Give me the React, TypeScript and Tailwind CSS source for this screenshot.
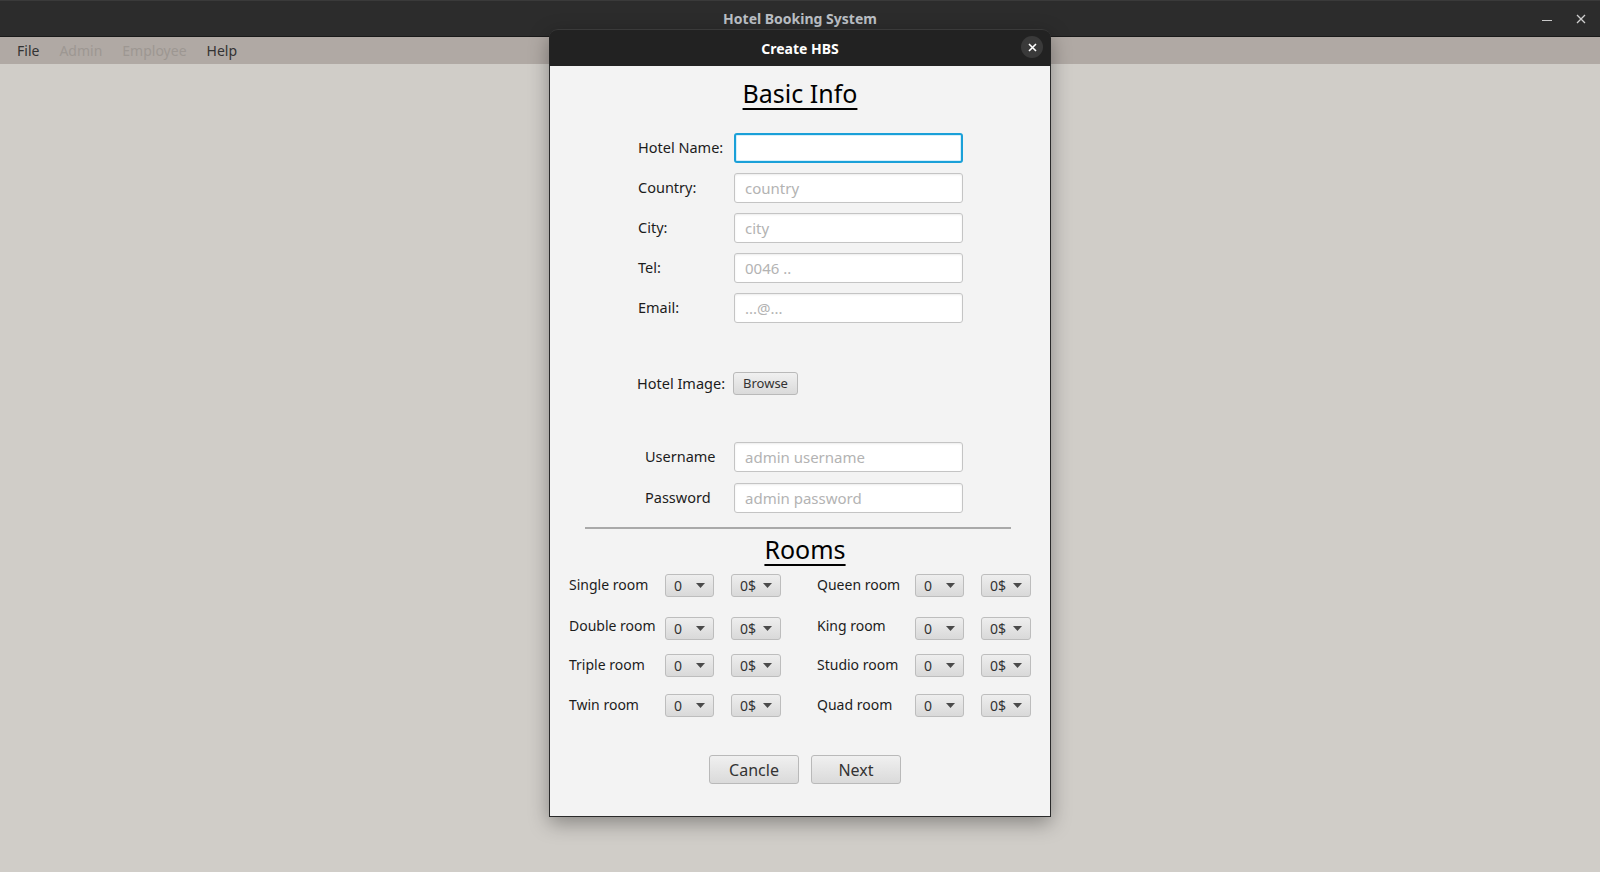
import React from "react";

const font = "font-['Noto_Sans','DejaVu_Sans',sans-serif]";

function TextField({ placeholder, focused }: { placeholder?: string; focused?: boolean }) {
  return (
    <div
      className={
        focused
          ? "h-[30px] w-[229px] rounded-[3px] border-2 border-[#1aa0d8] bg-white shadow-[inset_0_0_0_1px_#d6effa]"
          : "flex h-[30px] w-[229px] items-center rounded-[3px] border border-[#c4c4c4] bg-white px-[10px] text-[15px] text-[#b3b3b3] shadow-[inset_0_1px_2px_rgba(0,0,0,0.08)]"
      }
    >
      {placeholder}
    </div>
  );
}

function FormRow({
  label,
  children,
  className = "",
  labelClass = "pl-[88px] w-[184px]",
}: {
  label: string;
  children: React.ReactNode;
  className?: string;
  labelClass?: string;
}) {
  return (
    <div className={"flex items-center " + className}>
      <div className={"shrink-0 text-[14.5px] text-[#1c1c1c] " + labelClass}>{label}</div>
      {children}
    </div>
  );
}

function Combo({ value, width }: { value: string; width: string }) {
  return (
    <div
      className={
        "flex h-[23px] shrink-0 items-center justify-between rounded-[3px] border border-[#bdbdbd] bg-gradient-to-b from-[#eeeeee] to-[#d9d9d9] pl-[8px] pr-[8px] text-[14px] text-[#333] " +
        width
      }
    >
      <span>{value}</span>
      <svg width="9" height="5" viewBox="0 0 9 5">
        <path d="M0 0 L9 0 L4.5 5 Z" fill="#4a4a4a" />
      </svg>
    </div>
  );
}

function RoomPair({ label, lift, labelWidth }: { label: string; lift: string; labelWidth: string }) {
  return (
    <div className="flex items-center">
      <div className={"shrink-0 text-[14px] text-[#1c1c1c] " + labelWidth + " " + lift}>{label}</div>
      <Combo value="0" width="w-[49px]" />
      <div className="w-[17px]" />
      <Combo value="0$" width="w-[50px]" />
    </div>
  );
}

const rooms: [string, string, string, string][] = [
  ["Single room", "Queen room", "mt-[8px]", "-translate-y-[1px]"],
  ["Double room", "King room", "mt-[20px]", "-translate-y-[3px]"],
  ["Triple room", "Studio room", "mt-[14px]", "-translate-y-[1px]"],
  ["Twin room", "Quad room", "mt-[17px]", "-translate-y-[1px]"],
];

function GrayButton({ children, className = "" }: { children: React.ReactNode; className?: string }) {
  return (
    <div
      className={
        "flex items-center justify-center rounded-[3px] border border-[#b9b9b9] bg-gradient-to-b from-[#f0f0f0] to-[#dadada] text-[#333] " +
        className
      }
    >
      {children}
    </div>
  );
}

function Dialog() {
  return (
    <div className="absolute left-[549px] top-[29px] flex w-[502px] flex-col rounded-t-[9px] shadow-[0_6px_20px_rgba(0,0,0,0.35)]">
      <div className="relative flex h-[37px] items-center justify-center rounded-t-[9px] border-t border-[#3a3a3a] bg-[#222222]">
        <span className="text-[14px] font-bold text-white">Create HBS</span>
        <div className="absolute right-[8px] top-[6px] flex h-[22px] w-[22px] items-center justify-center rounded-full bg-[#3a3a3a]">
          <svg width="9" height="9" viewBox="0 0 9 9">
            <path d="M1 1 L8 8 M8 1 L1 8" stroke="#ffffff" strokeWidth="1.6" />
          </svg>
        </div>
      </div>
      <div className="flex h-[751px] flex-col border border-t-0 border-[#2a2a2a] bg-[#f3f3f3]">
        <div className="mt-[10px] text-center text-[25px] leading-[34px] text-black underline decoration-[2px] underline-offset-[5px]">
          Basic Info
        </div>
        <div className="mt-[23px] flex flex-col gap-[10px]">
          <FormRow label="Hotel Name:">
            <TextField focused />
          </FormRow>
          <FormRow label="Country:">
            <TextField placeholder="country" />
          </FormRow>
          <FormRow label="City:">
            <TextField placeholder="city" />
          </FormRow>
          <FormRow label="Tel:">
            <TextField placeholder="0046 .." />
          </FormRow>
          <FormRow label="Email:">
            <TextField placeholder="...@..." />
          </FormRow>
        </div>
        <FormRow label="Hotel Image:" className="mt-[49px]" labelClass="pl-[87px] w-[183px]">
          <GrayButton className="h-[23px] w-[65px] text-[13px]">Browse</GrayButton>
        </FormRow>
        <div className="mt-[47px] flex flex-col gap-[11px]">
          <FormRow label="Username" labelClass="pl-[95px] w-[184px]">
            <TextField placeholder="admin username" />
          </FormRow>
          <FormRow label="Password" labelClass="pl-[95px] w-[184px]">
            <TextField placeholder="admin password" />
          </FormRow>
        </div>
        <div className="ml-[35px] mt-[14px] h-[2px] w-[426px] bg-[#a9a9a9]" />
        <div className="mt-[3px] pl-[10px] text-center text-[25px] leading-[34px] text-black underline decoration-[2px] underline-offset-[5px]">
          Rooms
        </div>
        {rooms.map(([left, right, mt, lift]) => (
          <div key={left} className={"flex pl-[19px] " + mt}>
            <RoomPair label={left} lift={lift} labelWidth="w-[96px]" />
            <div className="w-[36px]" />
            <RoomPair label={right} lift={lift} labelWidth="w-[98px]" />
          </div>
        ))}
        <div className="mt-[38px] flex justify-center gap-[12px] pl-[10px]">
          <GrayButton className="h-[29px] w-[90px] text-[16px]">Cancle</GrayButton>
          <GrayButton className="h-[29px] w-[90px] text-[16px]">Next</GrayButton>
        </div>
      </div>
    </div>
  );
}

export default function App() {
  return (
    <div className={"relative flex h-[872px] w-[1600px] flex-col overflow-hidden bg-[#d0cdc8] " + font}>
      <div className="relative flex h-[37px] shrink-0 items-center justify-center border-t border-b border-t-[#3a3a3a] border-b-[#1a1a1a] bg-[#2c2c2c]">
        <span className="text-[14px] font-bold text-[#bcc0c6]">Hotel Booking System</span>
        <div className="absolute right-[48px] top-[19px] h-[1px] w-[10px] bg-[#c8c8c8]" />
        <svg className="absolute right-[14px] top-[13px]" width="10" height="10" viewBox="0 0 10 10">
          <path d="M1 1 L9 9 M9 1 L1 9" stroke="#cfcfcf" strokeWidth="1.3" />
        </svg>
      </div>
      <div className="flex h-[27px] shrink-0 items-center gap-[20px] bg-[#b0a9a4] pl-[17px] text-[14px]">
        <span className="text-[#333]">File</span>
        <span className="text-[#9d9792]">Admin</span>
        <span className="text-[#9d9792]">Employee</span>
        <span className="text-[#333]">Help</span>
      </div>
      <div className="flex-1" />
      <Dialog />
    </div>
  );
}
